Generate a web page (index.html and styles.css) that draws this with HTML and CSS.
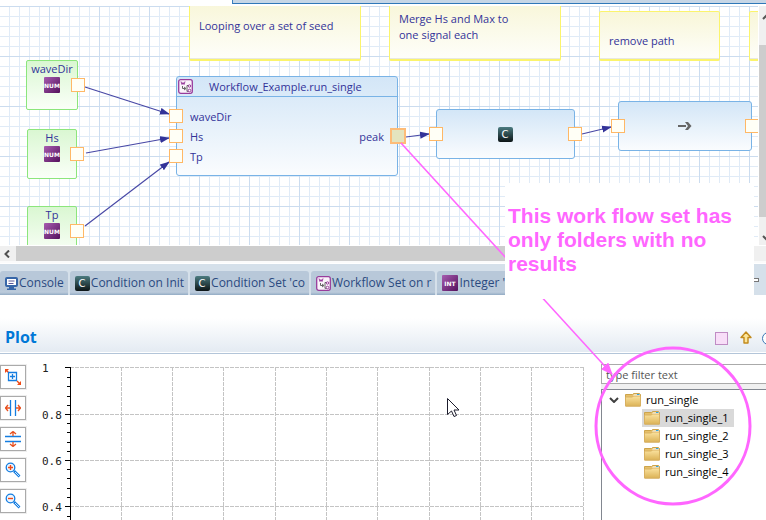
FILE: index.html
```html
<!DOCTYPE html>
<html lang="en">
<head>
<meta charset="utf-8">
<title>Workflow editor</title>
<link rel="stylesheet" href="styles.css">
</head>
<body>
<svg class="defs" aria-hidden="true">
  <defs>
    <linearGradient id="purple" x1="0" y1="0" x2="1" y2="1"><stop offset="0" stop-color="#a75cb0"/><stop offset="1" stop-color="#54105c"/></linearGradient>
    <linearGradient id="dark" x1="0" y1="0" x2="0" y2="1"><stop offset="0" stop-color="#4b7b80"/><stop offset="1" stop-color="#0c1416"/></linearGradient>
    <linearGradient id="gold" x1="0" y1="0" x2="0" y2="1"><stop offset="0" stop-color="#fbe3a0"/><stop offset="1" stop-color="#dcb357"/></linearGradient>
    <symbol id="num" viewBox="0 0 16 16"><rect width="16" height="16" rx="1" fill="url(#purple)"/><text x="8" y="11" class="badge">NUM</text></symbol>
    <symbol id="int" viewBox="0 0 16 16"><rect width="16" height="16" rx="1" fill="url(#purple)"/><text x="8" y="11" class="badge">INT</text></symbol>
    <symbol id="cond" viewBox="0 0 15 15"><rect width="15" height="15" rx="2" fill="url(#dark)"/><text x="7" y="11" class="badge badge-c">C</text></symbol>
    <symbol id="flow" viewBox="0 0 15 15"><rect x=".7" y=".7" width="13.6" height="13.6" rx="2" fill="#fbf3fb" stroke="#983c9c" stroke-width="1.3"/><path d="M3 2.500l1 3 1-2 1 2 1-3" fill="none" stroke="#983c9c"/><path d="M4.500 7v2.500h3M6 8l2 1.500-2 1.500M9 6.500v6M9 6.500h2M9 12.300h2" fill="none" stroke="#666"/><g fill="#fff" stroke="#983c9c"><circle cx="11.500" cy="7" r="1.200"/><circle cx="11.500" cy="11.500" r="1.300"/></g></symbol>
    <symbol id="folder" viewBox="0 0 16 14"><path d="M.5 1.500h7l1-1h6l1 1v11.500H.5z" fill="#e6c06a" stroke="#cda44b"/><path d="M9 1.500h6v2H8z" fill="#fff"/><path d="M12 1.500h2.500" stroke="#32a6e0"/><path d="M.5 4h7l1-1h7v10H.5z" fill="url(#gold)" stroke="#d8b060"/></symbol>
    <marker id="tip" viewBox="0 0 10 8" refX="9" refY="4" markerWidth="10" markerHeight="8" markerUnits="userSpaceOnUse" orient="auto"><path d="M0 0.500L10 4L0 7.500z" fill="#333399"/></marker>
    <marker id="pink-tip" viewBox="0 0 12 10" refX="11" refY="5" markerWidth="12" markerHeight="10" markerUnits="userSpaceOnUse" orient="auto"><path d="M0 0L12 5L0 10z" fill="#ff66ff"/></marker>
  </defs>
</svg>
<main class="workspace">
  <div class="editor-edge"></div>
  <section class="editor" aria-label="Workflow diagram">
    <div class="canvas">
      <div class="note n1">Looping over a set of seed</div>
      <div class="note n2">Merge Hs and Max to<br>one signal each</div>
      <div class="note n3">remove path</div>
      <div class="note n4"></div>
      <div class="source s1"><span>waveDir</span><svg class="i16"><use href="#num"/></svg></div>
      <div class="source s2"><span>Hs</span><svg class="i16"><use href="#num"/></svg></div>
      <div class="source s3"><span>Tp</span><svg class="i16"><use href="#num"/></svg></div>
      <div class="block workflow">
        <div class="block-head"><svg class="i15"><use href="#flow"/></svg><span>Workflow_Example.run_single</span></div>
        <div class="block-body">
          <ul class="ports-in"><li>waveDir</li><li>Hs</li><li>Tp</li></ul>
          <span class="port-out">peak</span>
        </div>
      </div>
      <div class="block condition"><svg class="i15"><use href="#cond"/></svg></div>
      <div class="block pass"><svg class="pass-arrow" viewBox="0 0 14 10"><path d="M0 5h8" stroke="#666" stroke-width="2"/><path d="M7 1h3l3.500 4-3.500 4H7l3-4z" fill="#666"/></svg></div>
      <svg class="edges" aria-hidden="true"><g stroke="#4747a5" stroke-width="1.200">
        <path d="M85 81L169 108" marker-end="url(#tip)"/><path d="M86 147L169 132" marker-end="url(#tip)"/><path d="M85 220L169 156" marker-end="url(#tip)"/><path d="M406 131L429 128" marker-end="url(#tip)"/><path d="M582 128L611 121" marker-end="url(#tip)"/></g></svg>
      <i class="port p1"></i><i class="port p2"></i><i class="port p3"></i>
      <i class="port p4"></i><i class="port p5"></i><i class="port p6"></i>
      <i class="port selected p7"></i><i class="port p8"></i><i class="port p9"></i><i class="port p10"></i><i class="port p11"></i>
    </div>
    <div class="vscroll">
      <button class="vbtn up" aria-label="Scroll up"><svg viewBox="0 0 10 6"><path d="M1 5l4-4 4 4" fill="none" stroke="#555" stroke-width="2"/></svg></button>
      <div class="vthumb"></div>
      <button class="vbtn down" aria-label="Scroll down"><svg viewBox="0 0 10 6"><path d="M1 1l4 4 4-4" fill="none" stroke="#555" stroke-width="2"/></svg></button>
    </div>
  </section>
  <div class="hscroll"><button aria-label="Scroll left"><svg viewBox="0 0 6 8"><path d="M5 .5L1.500 4 5 7.500" fill="none" stroke="#505050" stroke-width="2"/></svg></button><div class="hthumb"></div><div class="hend"></div></div>
  <nav class="tabs">
    <button><svg class="console" viewBox="0 0 13 13"><rect x="1" y="1" width="11" height="8" rx="1" fill="#fff" stroke="#3766a8" stroke-width="2"/><path d="M3.500 4h6M3.500 6.500h5" stroke="#5a5a9a"/><path d="M4 10h5v1.500h2V13H2v-1.500h2z" fill="#3766a8"/></svg>Console</button>
    <button><svg class="i15"><use href="#cond"/></svg>Condition on Init</button>
    <button><svg class="i15"><use href="#cond"/></svg>Condition Set 'co</button>
    <button><svg class="i15"><use href="#flow"/></svg>Workflow Set on r</button>
    <button><svg class="i16"><use href="#int"/></svg>Integer 'n</button>
    <span class="minimize"></span>
  </nav>
  <header class="plot-head">
    <h1>Plot</h1>
    <div class="actions">
      <button class="swatch" aria-label="Select"></button>
      <button aria-label="Up"><svg class="up-icon" viewBox="0 0 12 14"><path d="M6 1l5 5.500H8V12H4V6.500H1z" fill="#fce59a" stroke="#c28a1c" stroke-width="1.400" stroke-linejoin="round"/></svg></button>
      <button class="round" aria-label="Refresh"></button>
    </div>
  </header>
  <section class="plot">
    <div class="tools">
      <button aria-label="Zoom box"><svg viewBox="0 0 16 16"><path d="M1 1l3 3M15 15l-3-3" stroke="#f04a16" stroke-width="1.400"/><path d="M0 0h4L0 4zM16 16h-4l4-4z" fill="#f04a16"/><path d="M3.500 3.500h8v8h-8zM5 7.500h5M7.500 5v5" fill="none" stroke="#147de0" stroke-width="1.300"/></svg></button>
      <button aria-label="Zoom horizontally"><svg viewBox="0 0 16 16"><path d="M5.500 0v16M10.500 0v16" stroke="#147de0" stroke-width="1.300"/><path d="M0 8h5M3 5L0.500 8 3 11M11 8h5M13 5l2.500 3-2.500 3" fill="none" stroke="#e8501e" stroke-width="1.300"/></svg></button>
      <button aria-label="Zoom vertically"><svg viewBox="0 0 16 16"><path d="M0 5.500h16M0 10.500h16" stroke="#147de0" stroke-width="1.300"/><path d="M8 0v5M5 3L8 .5 11 3M8 11v5M5 13l3 2.500 3-2.500" fill="none" stroke="#e8501e" stroke-width="1.300"/></svg></button>
      <button aria-label="Zoom in"><svg viewBox="0 0 16 16"><path d="M9 9l5.500 5.500" stroke="#147de0" stroke-width="2.600"/><path d="M10 10l4 4" stroke="#cfe6ff"/><circle cx="5.500" cy="5.500" r="4.300" fill="#eef6ff" stroke="#147de0" stroke-width="1.300"/><path d="M3 5.500h5M5.500 3v5" stroke="#f04a16" stroke-width="1.400"/></svg></button>
      <button aria-label="Zoom out"><svg viewBox="0 0 16 16"><path d="M9 9l5.500 5.500" stroke="#147de0" stroke-width="2.600"/><path d="M10 10l4 4" stroke="#cfe6ff"/><circle cx="5.500" cy="5.500" r="4.300" fill="#eef6ff" stroke="#147de0" stroke-width="1.300"/><path d="M3 5.500h5" stroke="#f04a16" stroke-width="1.400"/></svg></button>
    </div>
    <div class="chart-wrap">
      <svg class="chart" role="img" aria-label="Empty plot">
        <g class="gridlines">
          <line x1="0" x2="100%" y1="0" y2="0"/><line x1="0" x2="100%" y1="47" y2="47"/><line x1="0" x2="100%" y1="93" y2="93"/><line x1="0" x2="100%" y1="139" y2="139"/>
          <line x1="10%" x2="10%" y1="0" y2="100%"/><line x1="20%" x2="20%" y1="0" y2="100%"/><line x1="30%" x2="30%" y1="0" y2="100%"/><line x1="40%" x2="40%" y1="0" y2="100%"/><line x1="50%" x2="50%" y1="0" y2="100%"/><line x1="60%" x2="60%" y1="0" y2="100%"/><line x1="70%" x2="70%" y1="0" y2="100%"/><line x1="80%" x2="80%" y1="0" y2="100%"/><line x1="90%" x2="90%" y1="0" y2="100%"/><line x1="100%" x2="100%" y1="0" y2="100%"/>
        </g>
        <path class="axis" d="M0 0V170M-5 0H0M-5 47H0M-5 93H0M-5 139H0M-3 10H0M-3 19H0M-3 29H0M-3 38H0M-3 56H0M-3 65H0M-3 75H0M-3 84H0M-3 102H0M-3 111H0M-3 121H0M-3 130H0M-3 149H0"/>
        <g class="ticks"><text x="-28" y="5">1</text><text x="-28" y="52">0.8</text><text x="-28" y="98">0.6</text><text x="-28" y="144">0.4</text></g>
      </svg>
    </div>
    <aside class="browser">
      <input type="text" placeholder="type filter text" aria-label="type filter text">
      <ul class="tree">
        <li><div class="row"><svg class="chevron" viewBox="0 0 10 6"><path d="M1 1l4 4 4-4" fill="none" stroke="#404040" stroke-width="2"/></svg><svg class="folder"><use href="#folder"/></svg><span>run_single</span></div>
          <ul>
            <li><div class="row current"><svg class="folder"><use href="#folder"/></svg><span>run_single_1</span></div></li>
            <li><div class="row"><svg class="folder"><use href="#folder"/></svg><span>run_single_2</span></div></li>
            <li><div class="row"><svg class="folder"><use href="#folder"/></svg><span>run_single_3</span></div></li>
            <li><div class="row"><svg class="folder"><use href="#folder"/></svg><span>run_single_4</span></div></li>
          </ul>
        </li>
      </ul>
    </aside>
  </section>
  <svg class="markup" aria-hidden="true">
    <path d="M401 143L612 374" stroke="#ff66ff" stroke-width="1.600" marker-end="url(#pink-tip)"/>
    <ellipse cx="673" cy="426" rx="77" ry="78" fill="none" stroke="#ff66ff" stroke-width="3"/>
    <path d="M447.500 398.500v16l4-3.500 2.500 5.500 2.500-1-2.500-5.500h5z" fill="#fff" stroke="#1c1c2c"/>
  </svg>
  <p class="callout">This work flow set has only folders with no results</p>
</main>
</body>
</html>
```
FILE: styles.css
```css
* { box-sizing: border-box; }
body { margin: 0; overflow: hidden; background: #fff; font: 11px/16px "Open Sans", "Noto Sans", sans-serif; color: #333399; }
button { border: 0; padding: 0; margin: 0; background: none; font: inherit; color: inherit; }
ul { list-style: none; margin: 0; padding: 0; }
svg { display: block; flex: none; }
.defs { position: absolute; width: 0; height: 0; }
.i16 { width: 16px; height: 16px; }
.i15 { width: 15px; height: 15px; }
.badge { font: bold 6px "DejaVu Sans", sans-serif; fill: #fff; text-anchor: middle; }
.badge-c { font: 10px "DejaVu Sans", sans-serif; }
.workspace { position: relative; display: flex; flex-direction: column; height: 100vh; overflow: hidden; }

.editor-edge { height: 4px; margin: 0 0 2px 232px; flex: none; background: #c6d6e6; border-left: 1px solid #3a80c0; border-bottom: 1px solid #2f78b8; }
.editor { display: flex; height: 239px; flex: none; }
.canvas {
  position: relative; flex: 1; overflow: hidden;
  background-image:
    linear-gradient(to right, #cbdcef 1px, transparent 1px),
    linear-gradient(#cbdcef 1px, transparent 1px),
    linear-gradient(to right, #e0ebf7 1px, transparent 1px),
    linear-gradient(#e0ebf7 1px, transparent 1px);
  background-size: 50px 50px, 50px 50px, 10px 10px, 10px 10px;
  background-position: -1px 0;
}
.note { position: absolute; width: 172px; padding: 0 9px; border: 1px solid #fbf46c; border-bottom-width: 2px; border-radius: 2px; background: linear-gradient(#f8f6d8, #fefefa); box-shadow: inset 0 -1px #e8e8e0; }
.n1 { left: 189px; top: -6px; height: 61px; padding-top: 17px; }
.n2 { left: 389px; top: -6px; height: 61px; padding-top: 10px; }
.n3 { left: 599px; top: 5px; width: 121px; height: 50px; padding-top: 21px; }
.n4 { left: 749px; top: 5px; width: 60px; height: 50px; }
.source { position: absolute; left: 27px; width: 50px; height: 50px; display: flex; flex-direction: column; align-items: center; border: 1px solid #8ce67c; border-radius: 2px; background: linear-gradient(#daf7d2, #fafff8); }
.s1 { left: 26px; top: 54px; width: 52px; }
.s2 { top: 123px; }
.s3 { top: 200px; }
.block { position: absolute; border: 1px solid #79b3e6; border-radius: 3px; background: linear-gradient(#d3e6f7, #fafcfe); }
.workflow { left: 176px; top: 70px; width: 222px; height: 100px; }
.block-head { display: flex; align-items: center; height: 20px; padding-left: 1px; gap: 16px; border-bottom: 1px solid #79b3e6; }
.block-body { display: flex; justify-content: space-between; align-items: center; padding: 10px 13px 0; line-height: 20px; }
.condition, .pass { display: flex; align-items: center; justify-content: center; height: 50px; }
.condition { left: 436px; top: 103px; width: 139px; }
.pass { left: 618px; top: 95px; width: 134px; }
.pass-arrow { width: 14px; height: 10px; }
.edges { position: absolute; inset: 0; width: 100%; height: 100%; fill: none; }
.port { position: absolute; width: 14px; height: 14px; border: 1px solid #ffb866; background: #fffff6; }
.p1 { left: 71px; top: 72px; }
.p2 { left: 70px; top: 141px; }
.p3 { left: 70px; top: 218px; }
.p4 { left: 169px; top: 103px; }
.p5 { left: 169px; top: 123px; }
.p6 { left: 169px; top: 143px; }
.p7 { left: 390px; top: 122px; }
.p8 { left: 429px; top: 121px; }
.p9 { left: 568px; top: 121px; }
.p10 { left: 611px; top: 113px; }
.p11 { left: 745px; top: 113px; }
.port.selected { width: 16px; height: 16px; border: 2px solid #fdbc78; background: #e4e4bf; }
.vscroll { display: flex; flex-direction: column; width: 8px; border-left: 1px solid #fff; background: #cdcdcd; overflow: hidden; }
.vbtn { width: 17px; height: 39px; background: #f0f0f0; display: flex; padding: 8px 3px 0; }
.vbtn.down { height: 28px; padding-top: 18px; }
.vbtn svg { width: 10px; height: 6px; }
.vthumb { flex: 1; background: #cdcdcd; }

.hscroll { display: flex; flex: none; height: 17px; margin-top: 1px; margin-bottom: 1px; background: #f0f0f0; border-bottom: 2px solid #fbfbfb; }
.hscroll button { width: 16px; display: flex; align-items: center; padding-left: 4px; }
.hscroll svg { width: 6px; height: 8px; }
.hthumb { flex: 1; background: #cdcdcd; }
.hend { width: 24px; }

.tabs { display: flex; flex: none; gap: 2px; height: 31px; padding-top: 7px; background: #d5e0ea; color: #2b4a80; font-size: 12px; }
.tabs button { display: flex; align-items: center; gap: 1px; padding: 0 4px 0 5px; border-radius: 3px 3px 0 0; background: linear-gradient(#b8c8d9 80%, #bccbdb 88%, #92abc4); white-space: nowrap; }
.tabs .console { width: 13px; height: 13px; }
.minimize { width: 8px; height: 4px; margin: 7px 7px 0 auto; border: 1px solid #777; background: #fff; }

.plot-head { display: flex; flex: none; justify-content: space-between; align-items: center; height: 59px; padding: 26px 0 0 5px; background: linear-gradient(#fff 40%, #e3eaf2); border-bottom: 1px solid #b3c5d9; box-shadow: inset 0 -1px #fff; }
.plot-head h1 { margin: 0; font: bold 16px/20px "Open Sans", sans-serif; color: #0078d7; }
.actions { display: flex; align-items: center; gap: 12px; padding-top: 2px; }
.actions .swatch { width: 13px; height: 13px; border: 1px solid #c08cc4; background: #f8def8; }
.up-icon { width: 12px; height: 14px; }
.actions .round { width: 13px; height: 13px; margin: 0 -9px 0 -2px; border: 1px solid #3a78b4; border-radius: 50%; background: #fff; }

.plot { display: flex; flex: 1; min-height: 0; }
.tools { display: flex; flex-direction: column; gap: 7px; width: 40px; padding-top: 11px; }
.tools button { display: flex; flex: none; align-items: center; justify-content: center; width: 26px; height: 24px; border: 1px solid #aaa; background: #fff; box-shadow: 0 0 0 1px #eee; }
.tools svg { width: 16px; height: 16px; }
.chart-wrap { flex: 1; min-width: 0; padding: 13px 18px 0 30px; }
.chart { width: 100%; height: 100%; overflow: visible; }
.gridlines { stroke: #c4c4c4; stroke-dasharray: 4 1; shape-rendering: crispEdges; }
.axis { stroke: #000; fill: none; shape-rendering: crispEdges; }
.ticks { font: 11px "DejaVu Sans Mono", monospace; fill: #222; }
.browser { display: flex; flex-direction: column; width: 165px; margin-top: 10px; background: #f0f0f0; color: #000; }
.browser input { width: 100%; height: 20px; padding: 0 4px; border: 1px solid #aaa; border-right: 0; border-radius: 0; background: #fff; font: inherit; color: #555; outline: 0; }
.browser input::placeholder { color: #555; opacity: 1; }
.tree { flex: 1; margin-top: 5px; padding: 1px 0 0 7px; border-left: 1px solid #828790; border-top: 1px solid #828790; background: #fff; }
.row { display: flex; align-items: center; height: 18px; gap: 5px; width: max-content; }
.row .folder { width: 16px; height: 14px; }
.row .chevron { width: 10px; height: 6px; margin-right: 1px; }
.tree ul { padding-left: 33px; }
.tree ul .row { padding: 0 5px 0 2px; }
.row.current { background: #d9d9d9; }

.markup { position: absolute; inset: 0; width: 100%; height: 100%; pointer-events: none; }
.callout { position: absolute; left: 505px; top: 183px; width: 249px; height: 116px; margin: 0; padding: 21px 3px; background: #fff; color: #ff66ff; font: bold 21px/24px "Liberation Sans", Arial, sans-serif; }
```
